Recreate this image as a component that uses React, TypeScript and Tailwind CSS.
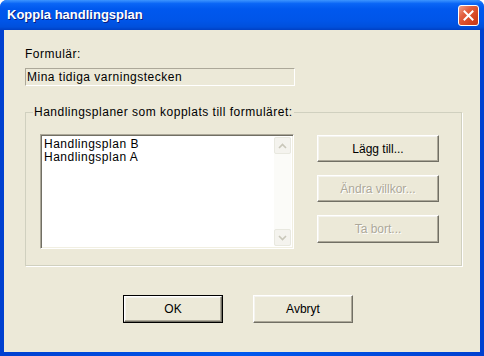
import React from 'react';

const ui = "font-['Liberation_Sans',Arial,sans-serif]";

// Classic 3D push button inside the XP-framed dialog
function ClassicButton({
    label,
    disabled = false,
    isDefault = false,
    className = '',
}: {
    label: string;
    disabled?: boolean;
    isDefault?: boolean;
    className?: string;
}) {
    const face = (
        <div
            className={
                'flex h-full w-full items-center justify-center border border-t-white border-l-white border-r-[#716F64] border-b-[#716F64] bg-[#ECE9D8] ' +
                'shadow-[inset_-1px_-1px_0_#ACA899,inset_1px_1px_0_#F4F3EE]'
            }
        >
            <span
                className={
                    disabled
                        ? 'text-[#ACA899] [text-shadow:1px_1px_0_#fff]'
                        : 'text-black'
                }
            >
                {label}
            </span>
        </div>
    );

    if (isDefault) {
        return <div className={'border border-black ' + className}>{face}</div>;
    }
    return <div className={className}>{face}</div>;
}

function ScrollArrow({ up }: { up: boolean }) {
    return (
        <div className="flex h-[17px] w-[17px] items-center justify-center rounded-[2px] border border-[#E8E8DF] bg-[#F4F3EE]">
            <svg width="9" height="6" viewBox="0 0 9 6">
                <path
                    d={up ? 'M1 5 L4.5 1.5 L8 5' : 'M1 1 L4.5 4.5 L8 1'}
                    fill="none"
                    stroke="#C9C7BA"
                    strokeWidth="1.6"
                />
            </svg>
        </div>
    );
}

function CloseButton() {
    return (
        <div className="flex h-[21px] w-[21px] items-center justify-center rounded-[3px] border border-white bg-[linear-gradient(135deg,#F0A08A_0%,#E25E3E_35%,#D3421E_75%,#C2381A_100%)]">
            <svg width="11" height="11" viewBox="0 0 11 11">
                <path d="M1.5 1.5 L9.5 9.5 M9.5 1.5 L1.5 9.5" stroke="#fff" strokeWidth="2" strokeLinecap="square" />
            </svg>
        </div>
    );
}

export default function App() {
    const plans = ['Handlingsplan B', 'Handlingsplan A'];

    return (
        <div className={'flex h-[356px] w-[484px] flex-col overflow-hidden rounded-t-[7px] bg-[#0048E0] ' + ui}>
            {/* Title bar */}
            <div className="flex h-[30px] shrink-0 items-center justify-between bg-[linear-gradient(180deg,#3D95FF_0%,#0A66F6_12%,#0058EE_30%,#0055E8_70%,#0050DC_90%,#0040C4_100%)] pl-[7px] pr-[5px]">
                <span className="text-[13px] font-bold text-white [text-shadow:1px_1px_0_#0A1E80]">
                    Koppla handlingsplan
                </span>
                <CloseButton />
            </div>

            {/* Client area framed by blue borders */}
            <div className="flex flex-1 flex-col px-[4px] pb-[4px] bg-[linear-gradient(90deg,#0040D0_0%,#0058EE_50%,#0040D0_100%)]">
                <div className="flex flex-1 flex-col bg-[#ECE9D8] pl-[21px] pt-[17px] text-[12px] tracking-[0.5px] text-black">
                    <div className="leading-[14px]">Formulär:</div>
                    <div className="mt-[7px] flex h-[18px] w-[270px] items-center border border-t-[#ACA899] border-l-[#ACA899] border-r-white border-b-white pl-[1px] leading-[14px]">
                        Mina tidiga varningstecken
                    </div>

                    <fieldset className="mt-[19px] h-[161px] w-[437px] border border-[#D0D0BF] shadow-[1px_1px_0_#fff] px-[14px]">
                        <legend className="ml-[-7px] px-[1px] leading-[14px]">
                            Handlingsplaner som kopplats till formuläret:
                        </legend>
                        <div className="mt-[15px] flex gap-[23px]">
                            {/* Listbox */}
                            <div className="flex h-[115px] w-[254px] border border-t-[#ACA899] border-l-[#ACA899] border-r-white border-b-white shadow-[inset_1px_1px_0_#716F64,inset_-1px_-1px_0_#F1EFE2] bg-white p-[2px]">
                                <div className="flex-1 pl-[1px] pt-[1px] leading-[13px]">
                                    {plans.map((p) => (
                                        <div key={p}>{p}</div>
                                    ))}
                                </div>
                                <div className="flex w-[17px] flex-col justify-between bg-[#FBFBF8]">
                                    <ScrollArrow up />
                                    <ScrollArrow up={false} />
                                </div>
                            </div>

                            {/* Action buttons */}
                            <div className="mt-[1px] flex flex-col gap-[13px] tracking-normal">
                                <ClassicButton label="Lägg till..." className="h-[27px] w-[122px]" />
                                <ClassicButton label="Ändra villkor..." disabled className="h-[27px] w-[122px]" />
                                <ClassicButton label="Ta bort..." disabled className="h-[28px] w-[122px]" />
                            </div>
                        </div>
                    </fieldset>

                    <div className="mt-[29px] flex gap-[30px] pl-[98px] tracking-normal">
                        <ClassicButton label="OK" isDefault className="h-[28px] w-[100px]" />
                        <ClassicButton label="Avbryt" className="h-[28px] w-[100px]" />
                    </div>
                </div>
            </div>
        </div>
    );
}
